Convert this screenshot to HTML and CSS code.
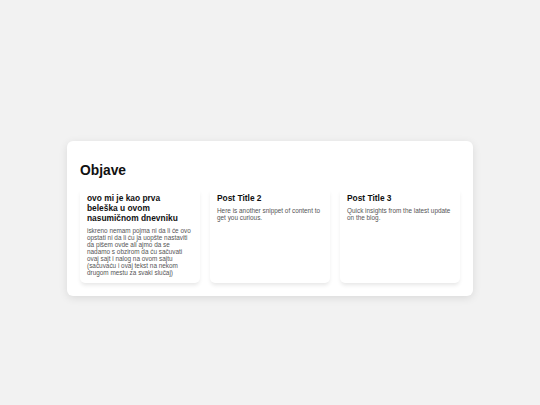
FILE: index.html
```html
<!DOCTYPE html>
<html lang="sr">
<head>
<meta charset="utf-8">
<title>Objave</title>
<link rel="stylesheet" href="styles.css">
</head>
<body>
<main class="panel">
  <h2 class="panel-title">Objave</h2>
  <div class="posts">
    <article class="card">
      <h3 class="card-title">ovo mi je kao prva beleška u ovom nasumičnom dnevniku</h3>
      <p class="card-text">iskreno nemam pojma ni da li će ovo opstati ni da li ću ja uopšte nastaviti da pišem ovde ali ajmo da se nadamo s obzirom da ću sačuvati ovaj sajt i nalog na ovom sajtu (sačuvaću i ovaj tekst na nekom drugom mestu za svaki slučaj)</p>
    </article>
    <article class="card">
      <h3 class="card-title">Post Title 2</h3>
      <p class="card-text">Here is another snippet of content to get you curious.</p>
    </article>
    <article class="card">
      <h3 class="card-title">Post Title 3</h3>
      <p class="card-text">Quick insights from the latest update on the blog.</p>
    </article>
  </div>
</main>
</body>
</html>
```

FILE: styles.css
```css
* { box-sizing: border-box; }

html, body {
  margin: 0;
  padding: 0;
}

body {
  min-height: 100vh;
  background: #f2f2f2;
  font-family: "Liberation Sans", Arial, sans-serif;
  display: flex;
  align-items: center;
  justify-content: center;
  padding-top: 32px;
}

.panel {
  width: 406px;
  background: #ffffff;
  border-radius: 6px;
  box-shadow: 0 2px 8px rgba(0, 0, 0, 0.1);
  padding: 13px 13px 13px;
}

.panel-title {
  margin: 9px 0 11px;
  font-size: 13.8px;
  font-weight: bold;
  color: #111111;
  line-height: normal;
}

.posts {
  display: grid;
  grid-template-columns: repeat(3, 120px);
  gap: 10px;
}

.card {
  background: #ffffff;
  border-radius: 0 0 5px 5px;
  box-shadow: 0 3px 4px -1px rgba(0, 0, 0, 0.1);
  padding: 4px 7px 7px;
}

.card-title {
  margin: 0 0 4px;
  font-size: 8.4px;
  font-weight: bold;
  color: #111111;
  line-height: normal;
}

.card-text {
  margin: 0;
  font-size: 6.4px;
  color: #555555;
  line-height: normal;
}
```
